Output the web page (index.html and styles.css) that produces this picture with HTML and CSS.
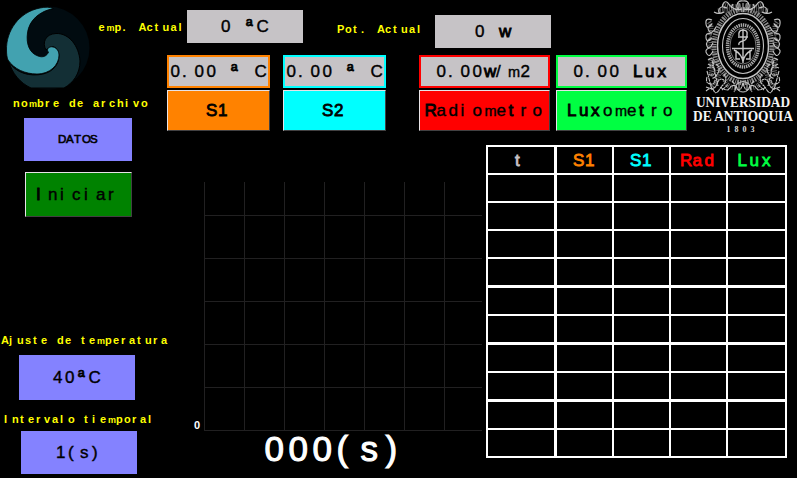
FILE: index.html
```html
<!DOCTYPE html>
<html lang="es">
<head>
<meta charset="utf-8">
<title>Monitor</title>
<link rel="stylesheet" href="styles.css">
</head>
<body>
<header class="top">
  <svg class="logo" width="97" height="92" viewBox="0 0 97 92">
    <circle cx="48" cy="48" r="41.5" fill="#010b10"/>
    <path d="M9 62C16 73 30 77 43 74C56 71 61 60 58 51C55 45 50 46 46 50C42 43 45 34 56 33.500C69 33 79 46 80 61C80 74 73 83 64 88H31C20 83 12 73 9 62Z" fill="#132f35" stroke="#000" stroke-width="1"/>
    <path d="M53.500 8.500C50 7 45 6.800 40 8C19 12 6 31 6.500 50C6.500 54 7 58 8 60C14 69 25 74 37 74C50 74 59 65 59 55C59 49 54 46 50 47C47 48 47 51 48.500 52C47 56 43 58 38 56C29 53 26 43 27.500 33C29 20 40 11 53.500 8.500Z" fill="#42a2b0" stroke="#000" stroke-width=".8"/>
  </svg>
  <svg class="small temp-label" width="90" height="48"><text y="31" x="1.500 9.500 17.500 25.500 33.500 41.500 49.500 57.500 65.500 73.500 81.500">e<tspan class="m">m</tspan>p. Actual</text></svg>
  <div class="value temp"><svg class="large" width="116" height="33"><text y="22" x="34 46 59 69.500">0 <tspan class="ord">ª</tspan>C</text></svg></div>
  <svg class="small pot-label" width="90" height="48"><text y="33" x="0 8 16 24 32 40 48 56 64 72 80">Pot. Actual</text></svg>
  <div class="value pot"><svg class="large" width="116" height="33"><text y="22" x="40 52 64">0 <tspan class="b">w</tspan></text></svg></div>
  <svg class="crest" width="112" height="136" viewBox="0 0 112 136">
    <g fill="none" stroke="#c4c4c4">
      <ellipse cx="58" cy="46" rx="29" ry="36.500" stroke-width="5" stroke-dasharray="1.5 1 2 .8 1 1.3" stroke="#8c8c8c"/>
      <ellipse cx="58" cy="46" rx="25.500" ry="32.500" stroke-width="1.500"/>
      <ellipse cx="58" cy="46" rx="20.500" ry="27.500" stroke-width="1.100"/>
      <ellipse cx="58" cy="46" rx="15.500" ry="21" stroke-width="3.400" stroke-dasharray="1.4 .8" stroke="#a8a8a8"/>
      <ellipse cx="58" cy="46" rx="13" ry="18" stroke-width=".6"/>
      <path d="M58 29V63M53 37H63M47 48.500H69M54 36Q53 30 58 30T62 35Q62 40 58 41Q53 42 54 45M51 50V59H55M65 50V59H61M49 50Q57 54 58 62Q59 54 67 50" stroke-width="1.400"/>
      <g id="scroll">
        <path d="M38 4Q46 8 56 6M33 11Q40 10 47 11M24 22Q28 27 24 35M24 38Q28 42 24 50M25 58Q29 66 25 76M34 70Q34 80 27 88M40 80Q42 88 52 88" stroke="#686868" stroke-width="5" stroke-dasharray="1.2 1 .8 1.3"/>
        <g stroke-width="1.100">
          <path d="M58 1Q53 0 52 5T57 9Q52 11 48 8T43 3Q40 0 38 4T42 8Q35 5 34 10T39 12Q34 15 29 12M48 4L46 8M54 3V8"/>
          <path d="M27 20Q20 17 21 24T27 24Q21 27 24 31T31 27M27 34Q20 32 21 38T27 38Q20 41 22 46T28 43M24 48Q19 50 22 54T28 51"/>
          <path d="M23 60Q29 56 29 62T23 64M22 68Q30 65 30 71T24 74M31 64Q36 67 33 73T27 78M22 77Q20 83 25 84T30 80M21 87Q30 91 32 84T39 80M21 91Q27 86 29 91T36 87M39 74Q43 81 38 85T43 90Q49 82 52 88T58 83M47 81Q53 87 49 92M37 90L43 85M22 71L27 90M27 60L33 86" stroke-dasharray="4 .6 2 .4"/>
        </g>
      </g>
      <use href="#scroll" transform="translate(116 0) scale(-1 1)"/>
      <path d="M51 85Q58 78 65 85Q64 92 58 92Q52 92 51 85ZM54 82V90M62 82V90M58 3V12" stroke-width="1"/>
    </g>
    <text class="uni" x="11" y="106.500" textLength="94" lengthAdjust="spacingAndGlyphs">UNIVERSIDAD</text>
    <text class="uni" x="8" y="121" textLength="100" lengthAdjust="spacingAndGlyphs">DE ANTIOQUIA</text>
    <text class="year" y="131.500" x="41.500 49.500 57.500 65.500">1803</text>
  </svg>
</header>

<div class="content">
  <aside class="side">
    <svg class="small name-label" width="167" height="15"><text y="12" x="13 21 29 37 45 53 61 69 77 85 93 101 109 117 125 133 141">no<tspan class="m">m</tspan>bre de archivo</text></svg>
    <div class="input file"><svg class="small dark" width="108" height="43"><text y="25" x="34 42 50 58 66">DATOS</text></svg></div>
    <div class="button start"><svg class="large" width="105" height="43"><text y="27" x="10 22 34 46 58 70 82"><tspan class="b">I</tspan>niciar</text></svg></div>
    <svg class="small adjust-label" width="170" height="15"><text y="12" x="1 9 17 25 33 41 49 57 65 73 81 89 97 105 113 121 129 137 145 153 161">Ajuste de te<tspan class="m">m</tspan>peratura</text></svg>
    <div class="input adjust"><svg class="large" width="116" height="45"><text y="28" x="34 46 59 69.500">40<tspan class="ord">ª</tspan>C</text></svg></div>
    <svg class="small interval-label" width="167" height="15"><text y="12" x="4 12 20 28 36 44 52 60 68 76 84 92 100 108 116 124 132 140 148">Intervalo tie<tspan class="m">m</tspan>poral</text></svg>
    <div class="input interval"><svg class="large" width="116" height="43"><text y="27" x="35 47 59 71">1(s)</text></svg></div>
  </aside>

  <main class="main">
    <section class="sensors">
      <div class="sensor s1">
        <div class="reading"><svg class="large" width="99" height="29"><text y="20" x="1.500 13 25.500 37.500 49.500 62 73.500 85.500">0.00 <tspan class="ord">ª</tspan> C</text></svg></div>
        <div class="button"><svg class="large strong" width="101" height="39"><text y="25" x="38 50">S1</text></svg></div>
      </div>
      <div class="sensor s2">
        <div class="reading"><svg class="large" width="99" height="29"><text y="20" x="1.500 13 25.500 37.500 49.500 62 73.500 85.500">0.00 <tspan class="ord">ª</tspan> C</text></svg></div>
        <div class="button"><svg class="large strong" width="101" height="39"><text y="25" x="38 50">S2</text></svg></div>
      </div>
      <div class="sensor rad">
        <div class="reading"><svg class="large" width="127" height="29"><text y="20" x="15.500 27 39.500 51.500 63 75 87 99.500">0.00<tspan class="b">w</tspan>/<tspan class="m">m</tspan>2</text></svg></div>
        <div class="button"><svg class="large" width="129" height="39"><text y="25" x="4.500 16.500 28.500 40.500 52.500 64.500 76.500 88.500 100.500 112.500"><tspan class="b">R</tspan>adio<tspan class="m">m</tspan>e<tspan class="b">t</tspan>ro</text></svg></div>
      </div>
      <div class="sensor lux">
        <div class="reading"><svg class="large" width="127" height="29"><text y="20" x="15.500 27 39.500 51.500 63 75 87 99.500">0.00 <tspan class="b">Lux</tspan></text></svg></div>
        <div class="button"><svg class="large" width="129" height="39"><text y="25" x="10 22 34 46 58 70 82 94 106"><tspan class="b">Lux</tspan>o<tspan class="m">m</tspan>e<tspan class="b">t</tspan>ro</text></svg></div>
      </div>
    </section>

    <section class="data">
      <div class="plot">
        <div class="plot-row">
          <svg class="small white" width="37" height="249"><text y="247" x="27">0</text></svg>
          <svg class="grid" width="279" height="249" shape-rendering="crispEdges">
            <path d="M.5 0V249M40.500 0V249M80.500 0V249M120.500 0V249M160.500 0V249M200.500 0V249M240.500 0V249M0 33.500H278M0 76.500H278M0 119.500H278M0 162.500H278M0 205.500H278M0 248.500H278"/>
          </svg>
        </div>
        <svg class="timer" width="315" height="46"><text y="30" x="97.500 121.500 145.500 169.500 193.500 218.500">000(s)</text></svg>
      </div>
      <table class="log">
        <thead><tr>
          <th class="c-t"><svg class="large strong" width="66" height="26"><text y="19" x="27">t</text></svg></th>
          <th class="c-s1"><svg class="large strong" width="55" height="26"><text y="19" x="16 28">S1</text></svg></th>
          <th class="c-s2"><svg class="large strong" width="55" height="26"><text y="19" x="16 28">S1</text></svg></th>
          <th class="c-rad"><svg class="large strong" width="55" height="26"><text y="19" x="9 21.500 33.500">Rad</text></svg></th>
          <th class="c-lux"><svg class="large strong" width="57" height="26"><text y="19" x="9.500 21.500 34">Lux</text></svg></th>
        </tr></thead>
        <tbody>
          <tr><td></td><td></td><td></td><td></td><td></td></tr>
          <tr><td></td><td></td><td></td><td></td><td></td></tr>
          <tr><td></td><td></td><td></td><td></td><td></td></tr>
          <tr><td></td><td></td><td></td><td></td><td></td></tr>
          <tr><td></td><td></td><td></td><td></td><td></td></tr>
          <tr><td></td><td></td><td></td><td></td><td></td></tr>
          <tr><td></td><td></td><td></td><td></td><td></td></tr>
          <tr><td></td><td></td><td></td><td></td><td></td></tr>
          <tr><td></td><td></td><td></td><td></td><td></td></tr>
          <tr><td></td><td></td><td></td><td></td><td></td></tr>
        </tbody>
      </table>
    </section>
  </main>
</div>
</body>
</html>
```
FILE: styles.css
```css
* { box-sizing: border-box; }
body {
  margin: 0;
  width: 797px;
  height: 478px;
  overflow: hidden;
  background: #000;
  font-family: "Liberation Sans", Arial, sans-serif;
}
svg { display: block; flex: none; overflow: visible; }

/* Fixed-pitch display lettering */
.small { font-size: 11px; font-weight: 700; fill: #ff0; }
.small .m { font-size: 9px; }
.small.dark { font-size: 11.5px; font-weight: 400; fill: #000; stroke: #000; stroke-width: .6px; }
.small.white { fill: #fff; }
.large { font-size: 17px; font-weight: 400; fill: currentColor; stroke: currentColor; stroke-width: .4px; }
.large .m { font-size: 14.5px; }
.large .b { stroke-width: .9px; }
.large .ord { font-size: 18px; stroke-width: .8px; }
.large.strong { stroke-width: .8px; }
.timer { font-size: 35px; fill: #fff; stroke: #fff; stroke-width: 1.1px; }

.top { display: flex; align-items: flex-start; height: 55px; }
.value { width: 116px; height: 33px; background: #c6c3c6; color: #000; }
.temp { margin-top: 10px; }
.pot-label { margin-left: 34px; }
.pot { margin: 15px 0 0 8px; }
.crest { margin-left: 134px; }
.uni { font: 700 14px "Liberation Serif", serif; fill: #f4f4f4; }
.year { font: 700 8px "Liberation Serif", serif; fill: #ddd; }

.content { display: flex; height: 423px; }
.side { display: flex; flex-direction: column; width: 167px; padding-top: 40px; }
.input { background: #8482ff; color: #000; }
.button {
  border: 1px solid;
  border-color: #e7e3e7 #424142 #424142 #e7e3e7;
  color: #000;
}
.file { width: 108px; height: 43px; margin: 8px 0 0 24px; }
.start { width: 107px; height: 45px; margin: 11px 0 0 25px; background: #008200; }
.adjust-label { margin-top: 115px; }
.adjust { width: 116px; height: 45px; margin: 8px 0 0 19px; }
.interval-label { margin-top: 11px; }
.interval { width: 116px; height: 43px; margin: 5px 0 0 21px; }

.main { width: 630px; }
.sensors { display: flex; height: 76px; }
.sensor { display: flex; flex-direction: column; gap: 2px; width: 103px; }
.sensor .reading { height: 33px; border: 2px solid; background: #c6c3c6; }
.sensor .reading svg { color: #000; }
.sensor .button { height: 41px; }
.s1 .reading { border-color: #ff8200; }
.s1 .button { background: #ff8200; }
.s2 { margin-left: 13px; }
.s2 .reading { border-color: #0ff; }
.s2 .button { background: #0ff; }
.rad { width: 131px; margin-left: 33px; }
.rad .reading { border-color: #f00; }
.rad .button { background: #f00; }
.lux { width: 131px; margin-left: 6px; }
.lux .reading { border-color: #00ff42; }
.lux .button { background: #00ff42; }

.data { display: flex; align-items: flex-start; padding-top: 14px; }
.plot { width: 319px; padding-top: 37px; }
.plot-row { display: flex; }
.grid path { fill: none; stroke: #212021; stroke-width: 1; }

.log {
  display: grid;
  grid-template-columns: 67px 55px 55px 55px 57px;
  grid-template-rows: 26px 26px 26px 26px 27px 26px 27px 26px 27px 26px 26px;
  gap: 2px;
  padding: 2px;
  background: #fff;
}
.log thead, .log tbody, .log tr { display: contents; }
.log th, .log td { height: 26px; padding: 0; background: #000; }
.log th:first-child, .log td:first-child { width: 66px; }
.c-t { color: #c6c3c6; }
.c-s1 { color: #ff8200; }
.c-s2 { color: #0ff; }
.c-rad { color: #f00; }
.c-lux { color: #00ff42; }
```
